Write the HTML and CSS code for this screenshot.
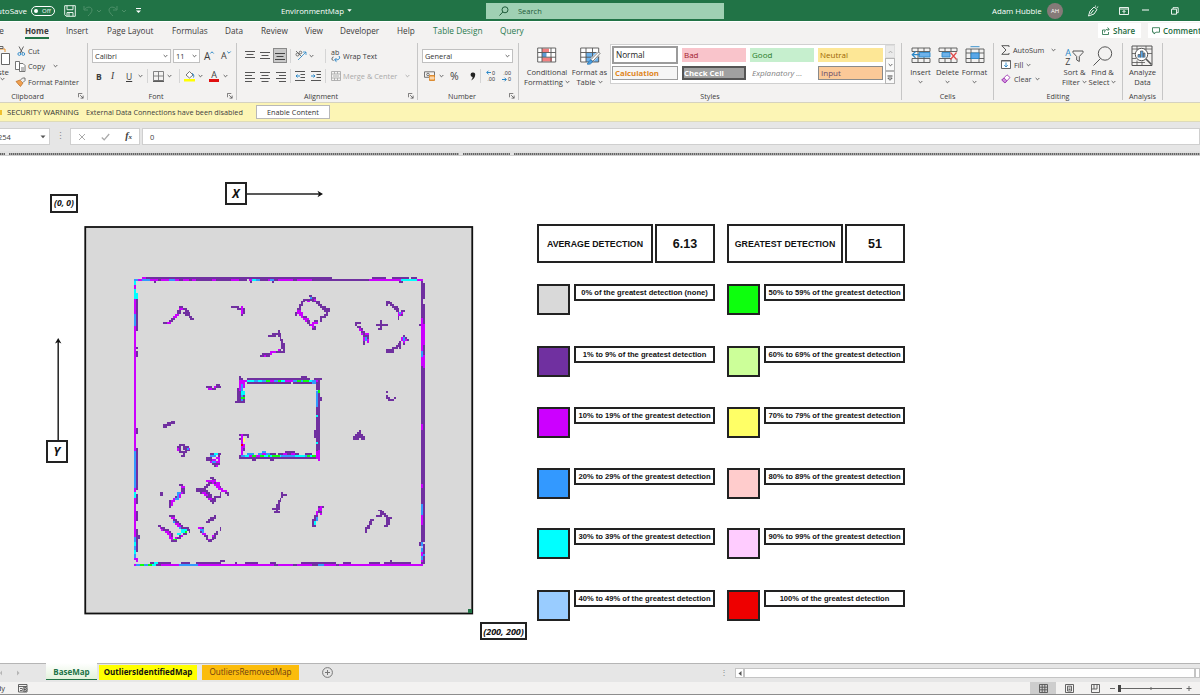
FILE: index.html
```html
<!DOCTYPE html>
<html lang="en">
<head>
<meta charset="utf-8">
<title>EnvironmentMap</title>
<link rel="stylesheet" href="styles.css">
</head>
<body>
<svg class="defs" width="0" height="0">
  <symbol id="caret" viewBox="0 0 6 4"><path d="M.8.8 3 3 5.200.8" fill="none" stroke="currentColor" stroke-width="1.100"/></symbol>
  <symbol id="launch" viewBox="0 0 7 7"><path d="M.5 5V.5H5M2.500 2.500 6 6M6 3v3H3" fill="none" stroke="#555" stroke-width=".9"/></symbol>
</svg>
<div class="app">
  <header class="titlebar">
    <span class="autosave">AutoSave</span>
    <span class="toggle"><i></i>Off</span>
    <svg width="12" height="12" viewBox="0 0 12 12" fill="none" stroke="#e6f2ea"><path d="M.7.7h10.600v10.600H2.200L.7 9.800zM3 .7v4h6v-4M3 11V7.500h6V11M5 8v3"/></svg>
    <svg width="20" height="12" viewBox="0 0 20 12" fill="none" stroke="#4d9069"><path d="M1 1v4h4M1.300 4.500C4 1 9 1.500 9 5c0 2-2 4-4 6M14 5l2 2 2-2"/></svg>
    <svg width="20" height="12" viewBox="0 0 20 12" fill="none" stroke="#4d9069"><path d="M9 1v4H5M8.700 4.500C6 1 1 1.500 1 5c0 2 2 4 4 6M14 5l2 2 2-2"/></svg>
    <svg width="9" height="8" viewBox="0 0 9 8"><path d="M2 1.500h5" stroke="#fff"/><path d="M2 3.500h5L4.500 6z" fill="#fff"/></svg>
    <span class="doc">EnvironmentMap<svg width="5" height="3" viewBox="0 0 5 3"><path d="M.3.3h4.400L2.500 2.700z" fill="#fff"/></svg></span>
    <span class="search"><svg width="10" height="10" viewBox="0 0 10 10" fill="none" stroke="#1f5c3a"><circle cx="6" cy="3.800" r="3"/><path d="M3.800 6 .5 9.500"/></svg>Search</span>
    <span class="user">Adam Hubble</span>
    <span class="avatar">AH</span>
    <svg class="c" width="12" height="12" viewBox="0 0 12 12" fill="none" stroke="#fff" stroke-width=".9"><path d="M1.500 11 3 6l4-4 3 2.500-3 4.500zM3.500 9l3-4M8 1.500l1-.8M9.800 2.600l1.400-.8"/></svg>
    <svg class="c" width="10" height="8" viewBox="0 0 10 8" fill="none" stroke="#fff" stroke-width=".9"><path d="M.5.5h9v7h-9zM.5 2h9M5 6.500V3.500M3.500 5 5 3.500 6.500 5"/></svg>
    <svg class="min" width="7" height="3" viewBox="0 0 7 3"><path d="M0 1h7" stroke="#fff"/></svg>
    <svg class="rest" width="8" height="8" viewBox="0 0 8 8" fill="none" stroke="#fff" stroke-width=".9"><path d="M.5 2.200h5v5h-5zM2 2V.7h5.200v5H6"/></svg>
  </header>

  <nav class="tabs">
    <span class="file">File</span><span class="active">Home</span><span>Insert</span><span>Page Layout</span><span>Formulas</span><span>Data</span><span>Review</span><span>View</span><span>Developer</span><span>Help</span><span class="ctx">Table Design</span><span class="ctx">Query</span>
    <span class="btn share"><svg width="8" height="8" viewBox="0 0 8 8" fill="none" stroke="#1d6b40" stroke-width=".8"><path d="M3 3H.5v4.500h6V5M2.500 5.500C2.500 3 4 2.200 7 2.200M5.500.5 7.300 2.200 5.500 4"/></svg>Share</span>
    <span class="btn comments"><svg width="8" height="8" viewBox="0 0 8 8" fill="none" stroke="#1d6b40" stroke-width=".8"><path d="M.5.7h7v4.500H4L2 7V5.200H.5z"/></svg>Comments</span>
  </nav>

  <section class="ribbon">
    <div class="group g-clip">
      <div class="body">
        <div class="paste">
          <svg width="11" height="21" viewBox="0 0 11 21" fill="none" stroke="#666"><path d="M0 4h5v3" stroke="#e8912d"/><path d="M0 1.500h3v2H0"/><path d="M1.500 8.500h8v11h-8z" fill="#fff"/></svg>
          <span class="crop">Paste</span><svg class="caret"><use href="#caret"/></svg>
        </div>
        <div class="rows3">
          <span class="cmd"><svg width="9" height="10" viewBox="0 0 9 10" fill="none" stroke="#555" stroke-width=".9"><path d="m2 .5 3.500 6.500M6.500.5 3.200 7"/><circle cx="2.300" cy="8" r="1.400" stroke="#2b88c8"/><circle cx="6.300" cy="8" r="1.400" stroke="#2b88c8"/></svg><em>Cut</em></span>
          <span class="cmd"><svg width="11" height="11" viewBox="0 0 11 11" fill="#fff" stroke="#666" stroke-width=".9"><path d="M.5.5h4v8h-4zM4.500 2.500h3.500l2 2v6H4.500zM6 7h3M6 9h3"/></svg><em>Copy</em><svg class="caret c2"><use href="#caret"/></svg></span>
          <span class="cmd"><svg width="11" height="10" viewBox="0 0 11 10"><path d="M1 4.500 5 3l3 3-2.500 3.500L4 8z" fill="#f0a050" stroke="#b86a20" stroke-width=".7"/><path d="m5.500 3 2-2h2.500v2.500L8 5.500" fill="#eee" stroke="#555" stroke-width=".8"/></svg><em>Format Painter</em></span>
        </div>
      </div>
      <div class="label lc">Clipboard<svg class="launch"><use href="#launch"/></svg></div>
    </div>

    <div class="group g-font">
      <div class="row r1"><span class="box f1">Calibri<svg class="caret"><use href="#caret"/></svg></span><span class="box f2">11<svg class="caret"><use href="#caret"/></svg></span><span class="big">A<svg width="4" height="3" viewBox="0 0 4 3"><path d="M.3 2.500 2 .8l1.700 1.700" fill="none" stroke="#2b88c8"/></svg></span><span class="big sm">A<svg width="4" height="3" viewBox="0 0 4 3"><path d="M.3.5 2 2.200 3.700.5" fill="none" stroke="#2b88c8"/></svg></span></div>
      <div class="row r2">
        <b>B</b><i class="it">I</i><u>U</u><svg class="caret"><use href="#caret"/></svg><hr>
        <svg width="11" height="11" viewBox="0 0 11 11" fill="none" stroke="#777" stroke-width=".9"><path d="M.5.5h10v9H.5zM5.500.5v9M.5 5h10"/><path d="M0 10.300h11" stroke="#222"/></svg><svg class="caret"><use href="#caret"/></svg><hr>
        <svg width="11" height="12" viewBox="0 0 11 12"><path d="m2 5 3.500-3.500L9 5 5.500 8z" fill="#fff" stroke="#555" stroke-width=".8"/><path d="M8 3.500c2 .5 2 2.500 1.500 4" fill="none" stroke="#2b88c8"/><path d="M0 9h11v2.500H0z" fill="#ffff00"/></svg><svg class="caret"><use href="#caret"/></svg>
        <span class="fcolor">A</span><svg class="caret"><use href="#caret"/></svg>
      </div>
      <div class="label lf">Font<svg class="launch"><use href="#launch"/></svg></div>
    </div>

    <div class="group g-align">
      <div class="row a1">
        <svg width="10" height="11" viewBox="0 0 10 11" stroke="#555"><path d="M0 1.500h10M1.500 4.500h7M0 7.500h10"/></svg>
        <svg width="10" height="11" viewBox="0 0 10 11" stroke="#555"><path d="M0 2.500h10M1.500 5.500h7M0 8.500h10"/></svg>
        <span class="on"><svg width="10" height="11" viewBox="0 0 10 11" stroke="#444"><path d="M0 3.500h10M1.500 6.500h7M0 9.500h10"/></svg></span><hr>
        <svg width="12" height="11" viewBox="0 0 12 11" fill="none" stroke="#555" stroke-width=".8"><circle cx="2.500" cy="4.500" r="1.500"/><path d="m1 1 6 6"/><circle cx="5.500" cy="2.500" r="1.300"/><path d="m3 10 8-8M8 2h3v3" stroke="#2b88c8"/></svg><svg class="caret"><use href="#caret"/></svg><hr>
        <span class="wrapi"><small>ab</small><svg width="10" height="6" viewBox="0 0 10 6" fill="none" stroke="#2b88c8"><path d="M8 0c2 3-1 4-4 4M5.500 2 3.500 4l2 1.700"/><path d="M2.500 1c-2 0-2 3.500 0 3.500" stroke="#555"/></svg></span><em>Wrap Text</em>
      </div>
      <div class="row a2">
        <svg width="10" height="11" viewBox="0 0 10 11" stroke="#555"><path d="M0 1.500h10M0 4.500h7M0 7.500h10M0 10.500h7"/></svg>
        <svg width="10" height="11" viewBox="0 0 10 11" stroke="#555"><path d="M0 1.500h10M1.500 4.500h7M0 7.500h10M1.500 10.500h7"/></svg>
        <svg width="10" height="11" viewBox="0 0 10 11" stroke="#555"><path d="M0 1.500h10M3 4.500h7M0 7.500h10M3 10.500h7"/></svg><hr>
        <svg width="10" height="10" viewBox="0 0 10 10" fill="none" stroke="#555"><path d="M0 .5h10M5.500 3.500H10M5.500 6.500H10M0 9.500h10"/><path d="M5 5H1M2.500 3.500 1 5l1.500 1.500" stroke="#2b88c8"/></svg>
        <svg width="10" height="10" viewBox="0 0 10 10" fill="none" stroke="#555"><path d="M0 .5h10M5.500 3.500H10M5.500 6.500H10M0 9.500h10"/><path d="M0 5h4M2.500 3.500 4 5 2.500 6.500" stroke="#2b88c8"/></svg><hr>
        <svg width="10" height="10" viewBox="0 0 10 10" fill="none" stroke="#aaa" stroke-width=".9"><path d="M.5.5h9v9h-9zM.5 3h9M.5 7h9M3.500.5V3M6.500.5V3M3.500 7v2.500M6.500 7v2.500M2 5h6"/></svg><em class="dim">Merge &amp; Center</em><svg class="caret dim"><use href="#caret"/></svg>
      </div>
      <div class="label la">Alignment<svg class="launch"><use href="#launch"/></svg></div>
    </div>

    <div class="group g-num">
      <div class="row n1"><span class="box">General<svg class="caret"><use href="#caret"/></svg></span></div>
      <div class="row n2">
        <svg width="11" height="10" viewBox="0 0 11 10" fill="none" stroke="#666" stroke-width=".9"><path d="M.5.8h10v5.500H.5z"/><circle cx="4" cy="3.500" r="1.300"/><path d="M5.500 4.500h5v5h-5z" fill="#f4b46a" stroke="#d98324"/><path d="M5.500 7h5" stroke="#fff"/></svg><svg class="caret"><use href="#caret"/></svg>
        <span class="pct">%</span><span class="comma"><svg width="6" height="9" viewBox="0 0 6 9"><path d="M3 .5a2.200 2.200 0 0 1 2.200 2.500C5 5.500 3.500 7.500 1 8.500 2.300 7 2.600 6 2.600 5A2.200 2.200 0 0 1 3 .5z" fill="#222"/></svg></span><hr>
        <span class="dec"><span><svg width="5" height="5" viewBox="0 0 5 5"><path d="M5 2.500H.8M2.500.7.7 2.500l1.800 1.800" fill="none" stroke="#2b88c8"/></svg>0</span><span>.00</span></span><span class="dec"><span>.00</span><span><svg width="5" height="5" viewBox="0 0 5 5"><path d="M0 2.500h4.200M2.500.7l1.800 1.800-1.800 1.800" fill="none" stroke="#2b88c8"/></svg>0</span></span>
      </div>
      <div class="label ln">Number<svg class="launch"><use href="#launch"/></svg></div>
    </div>

    <div class="group g-styles">
      <div class="body">
        <div class="tall t1"><svg width="20" height="20" viewBox="0 0 20 20"><path d="M.7 1.500h18v14H.7z" fill="#fff"/><path d="M5 2h7v4H5zM5 11h10v4H5z" fill="#f28080"/><path d="M5 6h4.500v4.500H5z" fill="#5b9bd5"/><path d="M.7 1.500h18v14H.7zM.7 6h18M.7 10.700h18M5 1.500v14M14 1.500v14" fill="none" stroke="#555" stroke-width=".9"/></svg><span>Conditional</span><span>Formatting<svg class="caret"><use href="#caret"/></svg></span></div>
        <div class="tall t2"><svg width="20" height="20" viewBox="0 0 20 20"><path d="M.7 1.500h18v14H.7z" fill="#fff"/><path d="M6 6h13v9.500H6z" fill="#6fb2ea"/><path d="M.7 1.500h18v14H.7zM.7 6h18M.7 10.700h18M6 1.500v14M12.500 1.500v14" fill="none" stroke="#555" stroke-width=".9"/><path d="M19 6.500 12 13.500" stroke="#fff" stroke-width="4"/><path d="M18.500 5.500 11 13l1.800 1.800L20 7z" fill="#fff" stroke="#555" stroke-width=".8"/><path d="M11 13.500c-2 0-2 3-4 4 2.500 1 5-.5 5.300-2.500z" fill="#4a9ee0" stroke="#2b78b8" stroke-width=".8"/></svg><span>Format as</span><span>Table<svg class="caret"><use href="#caret"/></svg></span></div>
        <div class="gallery">
          <div class="cells"><span class="normal">Normal</span><span class="bad">Bad</span><span class="good">Good</span><span class="neutral">Neutral</span><span class="calc">Calculation</span><span class="check">Check Cell</span><span class="expl">Explanatory ...</span><span class="input">Input</span></div>
          <div class="scroll"><span><svg class="caret up dim"><use href="#caret"/></svg></span><span><svg class="caret"><use href="#caret"/></svg></span><span class="more"><svg width="6" height="6" viewBox="0 0 6 6"><path d="M.5 1h5" stroke="#444"/><path d="M.8 3h4.400L3 5.300z" fill="none" stroke="#444" stroke-width=".8"/></svg></span></div>
        </div>
      </div>
      <div class="label">Styles</div>
    </div>

    <div class="group g-cells">
      <div class="body">
        <div class="tall"><svg width="20" height="20" viewBox="0 0 20 20" fill="none" stroke="#555" stroke-width=".9"><path d="M1 5V1.500h18V5M7 1.500V16M13 1.500V16M1 12v4h18v-4M1 5h18M1 12h18"/><path d="M8 6h11v4.500H8z" fill="#6fb2ea" stroke="#2b88c8"/><path d="M9 8.200H1.500M4.500 5 1.300 8.200l3.200 3.200" stroke="#2b88c8" stroke-width="1.300"/></svg><span>Insert</span><svg class="caret"><use href="#caret"/></svg></div>
        <div class="tall"><svg width="20" height="20" viewBox="0 0 20 20" fill="none" stroke="#555" stroke-width=".9"><path d="M1 5V1.500h18V5M7 1.500V5M13 1.500V5M7 12v4M13 12v4M1 12v4h18v-4M1 5h18M1 12h12"/><path d="M4 6h8v4.500H4z" fill="#6fb2ea" stroke="#2b88c8"/><path d="m12.500 6 6 7M18.500 6l-6 7" stroke="#e04848" stroke-width="1.200"/></svg><span>Delete</span><svg class="caret"><use href="#caret"/></svg></div>
        <div class="tall"><svg width="20" height="20" viewBox="0 0 20 20" fill="none" stroke="#555" stroke-width=".9"><path d="M1 2.500h18V16H1zM6 2.500V16M14 2.500V16M1 6.500h18M1 12h18"/><path d="M6 6.500h8V12H6z" fill="#5aa7e8" stroke="#2b88c8"/><path d="M5.500.2h9" stroke="#2b88c8"/></svg><span>Format</span><svg class="caret"><use href="#caret"/></svg></div>
      </div>
      <div class="label">Cells</div>
    </div>

    <div class="group g-edit">
      <div class="body">
        <div class="rows3">
          <span class="cmd"><svg width="9" height="10" viewBox="0 0 9 10" fill="none" stroke="#555"><path d="M8 2V.7H.8L5 5 .8 9.300H8V8"/></svg><em>AutoSum</em><svg class="caret c3"><use href="#caret"/></svg></span>
          <span class="cmd"><svg width="10" height="9" viewBox="0 0 10 9" fill="#fff" stroke="#555" stroke-width=".9"><path d="M.5.5h9v8h-9z"/><path d="M.5 1h9"/><path d="M5 2.500v4.500M3.200 5.200 5 7l1.800-1.800" stroke="#2b88c8" fill="none"/></svg><em>Fill</em><svg class="caret"><use href="#caret"/></svg></span>
          <span class="cmd"><svg width="10" height="10" viewBox="0 0 10 10" fill="#fff" stroke="#a33fb5" stroke-width=".9"><path d="M.8 6 6 .8 9 3.500 4 9z"/><path d="M.8 6 3 4l3 2.800L4 9z" fill="#cf8fdc"/></svg><em>Clear</em><svg class="caret"><use href="#caret"/></svg></span>
        </div>
        <div class="tall"><span class="az"><span><b>A</b><b>Z</b></span><svg width="12" height="13" viewBox="0 0 12 13" fill="none" stroke="#555"><path d="M1 1h10v1.500L7.300 6.500v5L4.700 10V6.500L1 2.500z"/></svg></span><span>Sort &amp;</span><span>Filter<svg class="caret"><use href="#caret"/></svg></span></div>
        <div class="tall"><svg width="20" height="20" viewBox="0 0 20 20" fill="none" stroke="#555"><circle cx="12" cy="7" r="6.700"/><path d="M7.500 12 .5 19"/></svg><span>Find &amp;</span><span>Select<svg class="caret"><use href="#caret"/></svg></span></div>
      </div>
      <div class="label">Editing</div>
    </div>

    <div class="group g-an">
      <div class="body"><div class="tall"><svg width="22" height="21" viewBox="0 0 22 21" fill="none" stroke="#555"><path d="M1 .5h20v19.500H1z"/><path d="M1 3.500h20M1 8h4M1 13h4M17 8h4M1 17h13M6 .5v4M15 .5v4M6 15v5M11 16v4" stroke-width=".8"/><circle cx="10.500" cy="9" r="6.200" fill="#fff"/><path d="m15 13.500 5.500 5.500" stroke-width="1.600"/><path d="M7 12V9h2v3M9.500 12V5.500H12V12M12.500 12V7.500h1.500V12" fill="#5aa7e8" stroke-width=".7"/></svg><span>Analyze</span><span>Data</span></div></div>
      <div class="label">Analysis</div>
    </div>
  </section>

  <div class="warning"><i class="shield"></i><strong>SECURITY WARNING</strong><span>External Data Connections have been disabled</span><button>Enable Content</button></div>

  <div class="formula">
    <div class="namebox"><span>254</span><svg width="6" height="4" viewBox="0 0 6 4"><path d="M.5.5h5L3 3.300z" fill="#555"/></svg></div>
    <div class="dots">⋮</div>
    <div class="fbtns"><svg width="8" height="8" viewBox="0 0 8 8" stroke="#aaa"><path d="m1 1 6 6M7 1 1 7"/></svg><svg width="9" height="8" viewBox="0 0 9 8" fill="none" stroke="#aaa" stroke-width="1.300"><path d="m.8 4.500 2.400 2.300L8.200 1"/></svg><i>f<small>x</small></i></div>
    <div class="fx">0</div>
  </div>
  <div class="colheads"><i></i><i></i><i></i><i></i></div>

  <main class="sheet">
    <span class="tag origin">(0, 0)</span>
    <span class="tag axis ax">X</span>
    <span class="tag axis ay">Y</span>
    <span class="tag extent">(200, 200)</span>
    <svg class="arrow arrx" width="77" height="8" viewBox="0 0 77 8"><path d="M0 4h74" stroke="#222" stroke-width="1.500"/><path d="m70.500.8 5.500 3.200-5.500 3.200 1.500-3.200z" fill="#111"/></svg>
    <svg class="arrow arry" width="8" height="103" viewBox="0 0 8 103"><path d="M4.200 3v100" stroke="#222" stroke-width="1.500"/><path d="M1 6.500 4.200 1l3.200 5.500L4.200 5z" fill="#111"/></svg>
    <svg class="map" id="map" width="389" height="389" viewBox="0 0 389 389"></svg>
    <div class="legend">
      <div class="side">
        <div class="stat"><span>AVERAGE DETECTION</span><b>6.13</b></div>
        <div class="item"><i class="c0"></i><span>0% of the greatest detection (none)</span></div>
        <div class="item"><i class="c1"></i><span>1% to 9% of the greatest detection</span></div>
        <div class="item"><i class="c10"></i><span>10% to 19% of the greatest detection</span></div>
        <div class="item"><i class="c20"></i><span>20% to 29% of the greatest detection</span></div>
        <div class="item"><i class="c30"></i><span>30% to 39% of the greatest detection</span></div>
        <div class="item"><i class="c40"></i><span>40% to 49% of the greatest detection</span></div>
      </div>
      <div class="side">
        <div class="stat"><span>GREATEST DETECTION</span><b>51</b></div>
        <div class="item"><i class="c50"></i><span>50% to 59% of the greatest detection</span></div>
        <div class="item"><i class="c60"></i><span>60% to 69% of the greatest detection</span></div>
        <div class="item"><i class="c70"></i><span>70% to 79% of the greatest detection</span></div>
        <div class="item"><i class="c80"></i><span>80% to 89% of the greatest detection</span></div>
        <div class="item"><i class="c90"></i><span>90% to 99% of the greatest detection</span></div>
        <div class="item"><i class="c100"></i><span>100% of the greatest detection</span></div>
      </div>
    </div>
  </main>

  <div class="sheets">
    <div class="navs"><svg width="22" height="6" viewBox="0 0 22 6" fill="#b5b5b5"><path d="M2 .5v5L0 3zM17 .5v5L19.500 3z"/></svg></div>
    <span class="st base">BaseMap</span><span class="st ident">OutliersIdentifiedMap</span><span class="st removed">OutliersRemovedMap</span>
    <svg class="plus" width="11" height="11" viewBox="0 0 11 11" fill="none" stroke="#777"><circle cx="5.500" cy="5.500" r="4.900"/><path d="M5.500 3v5M3 5.500h5"/></svg>
    <span class="grip">⋮</span>
    <div class="hbar"><span class="left"><svg width="4" height="5" viewBox="0 0 4 5"><path d="M3.500 0v5L.5 2.500z" fill="#555"/></svg></span><span class="track"></span><span class="right"></span></div>
  </div>
  <footer class="status">
    <span class="ready">Ready</span>
    <svg width="10" height="9" viewBox="0 0 10 9" fill="none" stroke="#555" stroke-width=".9"><path d="M.5.5h8.500v7.500H.5zM.5 2.500H9M2 4.500h2M2 6.500h2"/><circle cx="6.800" cy="5.500" r="2.200" fill="#ddd"/><circle cx="6.800" cy="5.500" r=".8" fill="#444"/></svg>
    <span class="view on"><svg width="9" height="9" viewBox="0 0 9 9" fill="none" stroke="#555" stroke-width=".9"><path d="M.5.5h8v8h-8zM3.200.5v8M5.800.5v8M.5 3.200h8M.5 5.800h8"/></svg></span>
    <span class="view"><svg width="9" height="9" viewBox="0 0 9 9" fill="none" stroke="#555" stroke-width=".9"><path d="M.5.5h8v8h-8zM2.500 2.200h4v4.800h-4zM3.500 4h2M3.500 5.500h2"/></svg></span>
    <span class="view"><svg width="9" height="9" viewBox="0 0 9 9" fill="none" stroke="#555" stroke-width=".9"><path d="M.5.5h8v8h-8zM3 .5v4.500M6 .5v4.500M.5 5H6"/></svg></span>
    <svg class="zoom" width="82" height="9" viewBox="0 0 82 9" stroke="#666"><path d="M0 4.500h5M76.500 4.500h5M79 2v5M8 4.500h64" /><path d="M41 3v3"/><path d="M8 1h3v7H8z" fill="#444" stroke="none"/></svg>
  </footer>
</div>
<script src="map.js"></script>
</body>
</html>
```
FILE: styles.css
```css
*{box-sizing:border-box}
body{margin:0;font-family:"Open Sans","Noto Sans",sans-serif;font-size:7.500px;color:#3c3c3c;background:#fff}
svg{flex:none;display:block;overflow:visible}
em,i{font-style:normal}
em,span,strong,b{white-space:nowrap}
hr{border:0;margin:0;width:1px;height:14px;background:#d5d5d5}
.defs{position:absolute}
.app{width:1200px;height:695px;display:flex;flex-direction:column;overflow:hidden}
.caret{width:5px;height:4px;color:#555}
.dim{color:#aaa!important}
.up{transform:rotate(180deg)}

.titlebar{height:21px;flex:none;background:#217346;color:#fff;display:grid;grid-template-columns:31px 33px 19px 25px 25px 148px 205px 506px 55px 32px 28px 33px 28px 32px;align-items:center;font-size:7.800px}
.autosave{justify-self:end;margin-right:4px;font-size:8px}
.toggle{width:24px;height:10px;border:1px solid #fff;border-radius:5px;font-size:6px;line-height:8px;display:flex;align-items:center;gap:4px;padding-left:2px}
.toggle i{width:4px;height:4px;border-radius:50%;background:#fff}
.titlebar>svg:nth-of-type(4){margin-left:1px}
.doc{display:flex;align-items:center;gap:3px}
.search{width:238px;height:16px;background:#9fd0b3;color:#1f5c3a;display:flex;align-items:center;padding-left:13px;gap:9px;font-size:7.500px}
.avatar{width:16px;height:16px;border-radius:50%;background:#857a78;font-size:6px;display:grid;place-items:center}
.user{font-size:7.800px}
.c{justify-self:center}.min{justify-self:start;margin-left:2px}.rest{margin-left:3px}

.tabs{height:22px;flex:none;background:#f3f2f1;border-top:1px solid #fff;display:grid;grid-template-columns:25px 41px 41px 65px 53px 36px 44px 35px 57px 36px 67px 598px 50px 52px;font-size:8.200px;line-height:18px}
.tabs>span{justify-self:start}
.file{margin-left:-9px}
.active{font-weight:700;height:17px;border-bottom:2px solid #217346;font-size:8px}
.tabs .ctx{color:#2b7a50;font-size:8.300px}
.btn{background:#fff;height:15px;margin-top:1px;display:flex;align-items:center;gap:3px;color:#1d6b40;font-weight:600;padding-left:4px;font-size:8px;line-height:14px}
.share{width:43px}.comments{width:60px}

.ribbon{height:60px;flex:none;background:#f3f2f1;display:grid;grid-template-columns:88px 149px 181px 101px 383px 92px 129px 40px 37px;border-bottom:1px solid #d5d2c0}
.group{height:57px;border-right:1px solid #c6c6c6;display:flex;flex-direction:column;position:relative;min-width:0}
.body{height:47px;display:flex}
.label{margin-top:auto;height:8px;line-height:8px;text-align:center;font-size:7.200px;display:flex;justify-content:center}
.launch{width:6px;height:6px;margin-top:1px;position:absolute;right:3px}
.lc{padding-right:32px}
.lf{padding-right:12px}.la{padding-right:12px}.ln{padding-right:12px}
.paste{width:14px;overflow:hidden;padding-top:2px}
.crop{display:block;margin:1px 0 0 -11px;line-height:10px;font-size:7.800px}
.rows3{display:grid;grid-auto-rows:15.500px}
.cmd{display:flex;align-items:center;gap:2px;font-size:7.600px}
.g-clip .cmd{font-size:7.300px}
.g-clip .rows3{padding-left:1px}
.g-clip .cmd:nth-child(1){padding-left:2px}
.c2{margin-left:6px}
.row{display:grid;align-items:center}
.r1,.a1,.n1{margin-top:5px;height:15px}
.r2,.a2,.n2{height:26px}
.box{background:#fff;border:1px solid #c0c0c0;height:14px;display:flex;align-items:center;justify-content:space-between;padding:0 2px;font-size:7.400px;color:#333}
.r1{grid-template-columns:79px 27px 15px 17px;column-gap:2px;padding-left:4px}
.big{font-size:10px;padding-left:2px;line-height:12px;display:flex}
.big svg{margin-top:1px}
.big.sm{font-size:9px}
.r2{grid-template-columns:15px 15px 12px 9px 6px 14px 12px 5px 14px 11px 14px 9px;padding-left:8px;font-size:8.500px}
.it{font-style:italic;font-family:"Liberation Serif",serif;font-size:9.500px}
.fcolor{border-bottom:3px solid #e01010;line-height:9px;height:12px;width:10px;text-align:center;font-size:9px}
.a1{grid-template-columns:15px 13px 17px 5px 14px 16px 6px 12px 40px;padding-left:8px}
.a2{grid-template-columns:15px 16px 14px 5px 16px 14px 6px 12px 62px 9px;padding-left:8px}
.a1 em{font-size:7.200px}.a2 em{font-size:7.400px}
.on{background:#c9c9c9;border:1px solid #8a8a8a;width:14px;height:15px;display:grid;place-items:center}
.wrapi small{display:block;font-size:7px;line-height:6px}
.n1{padding:0 4px}
.n1 .box{width:91px}
.n2{grid-template-columns:15px 11px 20px 10px 5px 16px 12px;padding-left:6px}
.pct{font-size:10.500px}
.dec{font:5.500px/6.500px "Liberation Sans",sans-serif;display:grid;width:10px}
.dec span{display:flex;justify-content:flex-end;align-items:center;gap:1px}

.g-styles .body{padding-left:5px}
.tall{display:flex;flex-direction:column;align-items:center;font-size:7.600px;line-height:10px;padding-top:3px}
.tall>svg:first-child{height:21px}
.tall>span{display:flex;align-items:center;gap:2px}
.tall>.caret{margin-top:3px}
.t1{width:46px}.t2{width:39px}
.gallery{margin:1px 0 0 1px;width:285px;height:40px;background:#fff;border:1px solid #d0d0d0;display:flex;justify-content:space-between}
.cells{display:grid;grid-template-columns:66px 64px 64px 65px;column-gap:4px;grid-template-rows:18px 15px;row-gap:1px;padding:1px;align-items:center;font-size:8px;line-height:13px}
.cells span{height:14px;padding-left:2px}
.cells .normal{height:18px;border:2px solid #9b9b9b;line-height:14px;color:#222;font-size:8.200px}
.bad{background:#f9c4cb;color:#a02030}.good{background:#c6efce;color:#2a7a2a}.neutral{background:#fde796;color:#9c6500}
.cells .calc{color:#e0861e;font-weight:700;border:1px solid #9b9b9b;background:#f5f5f5;line-height:12px;font-size:7.800px}
.cells .check{background:#a0a0a0;color:#fff;font-weight:700;border:2px solid #555;padding-left:0;line-height:10px;font-size:7.800px}
.cells .expl{font-style:italic;color:#7f7f7f}
.cells .input{background:#fbc998;border:1px solid #8a8a8a;color:#6a4a6a;line-height:12px}
.scroll{width:10px;display:grid;grid-template-rows:13px 13px 13px;margin-right:-1px}
.scroll span{border:1px solid #b5b5b5;display:grid;place-items:center;background:#fafafa}
.scroll span:first-child{background:#eaeaea;border-color:#ddd}

.g-cells .body{padding-left:5px}
.g-cells .tall{width:27px}
.g-edit .rows3{grid-auto-rows:14.500px;width:67px;padding-left:7px}
.g-edit .cmd{gap:3px}
.g-edit .cmd em{font-size:7.300px}
.c3{margin-left:4px}
.g-edit .tall:nth-child(2){width:27px}.g-edit .tall:nth-child(3){width:29px}
.tall>.az{height:21px;gap:1px}
.az>span{display:grid;line-height:9px;font-size:9px}
.az b{font-weight:400}.az b:first-child{color:#2b88c8}
.g-an .body{justify-content:center}
.g-an .tall{padding-top:2px}.g-an .tall svg{height:22px}

.warning{height:19px;flex:none;background:#fcf5b5;border-bottom:1px solid #dedbb8;display:grid;grid-template-columns:7px 79px 170px 74px;align-items:center;font-size:7.260px}
.warning strong{font-weight:400;font-size:7.650px;color:#333}
.shield{width:2px;height:5px;background:#f0c030}
.warning button{font:inherit;color:#333;background:#fff;border:1px solid #b8b8b8;height:14px;padding:0;line-height:10px;margin-top:-1px}

.formula{height:29px;flex:none;background:#e6e6e6;display:grid;grid-template-columns:50px 20px 70px 2px 1fr;padding-top:6px}
.formula>div{height:17px}
.namebox,.fbtns,.fx{background:#fff;border:1px solid #cfcfcf;display:flex;align-items:center}
.namebox{border-left:0;justify-content:space-between;padding-right:3px}
.namebox span{margin-left:-2px}
.dots{text-align:center;color:#888;line-height:15px;font-size:9px}
.fbtns{justify-content:space-between;padding:0 7px}
.fbtns i{font-family:"Liberation Serif",serif;font-style:italic;font-weight:700;font-size:10px;line-height:12px}
.fbtns small{font-size:7px}
.fx{grid-column:5;padding-left:7px}
.colheads{height:5px;flex:none;background:#e2e2e2;display:grid;grid-template-columns:5px 450px 47px 1fr;column-gap:4px;padding-top:1px;border-bottom:1px solid #d0d0d0}
.colheads i{height:2px;margin-top:1px;background:repeating-linear-gradient(90deg,#666 0 1px,#aaa 1px 2px)}

/* drawing surface: shapes float over the grid at free positions */
.sheet{height:507px;flex:none;position:relative;background:#fff}
.tag{position:absolute;border:2px solid #222;background:#fff;color:#111;font-weight:700;font-style:italic;display:grid;place-items:center;line-height:1}
.origin{left:50px;top:38px;width:28px;height:19px;font-size:8.500px}
.axis{width:22px;height:23px;font-size:12px}
.ax{left:225px;top:26px}.ay{left:46px;top:284px}
.extent{left:480px;top:466px;width:47px;height:18px;font-size:9px}
.arrow{position:absolute}
.arrx{left:247px;top:34px}.arry{left:54px;top:181px}
.map{position:absolute;left:84px;top:70px}
.legend{position:absolute;left:537px;top:68px;display:grid;grid-template-columns:178px 178px;column-gap:12px;font-family:"Liberation Sans",Arial,sans-serif;font-weight:700;color:#111}
.side{display:grid;grid-template-rows:60px 62px 61px 61px 60px 62px 31px}
.stat{display:grid;grid-template-columns:116px 60px;column-gap:2px;height:39px}
.stat>*{border:2px solid #222;display:grid;place-items:center}
.stat span{font-size:8.800px}.stat b{font-size:12.500px}
.item{display:grid;grid-template-columns:33px 141px;column-gap:4px;height:31px}
.item i{border:2px solid #222}
.item span{border:2px solid #222;height:17px;display:grid;place-items:center;font-size:7.600px;line-height:1}
.c0{background:#d9d9d9}.c1{background:#7030a0}.c10{background:#cc00ff}.c20{background:#3399ff}.c30{background:#00ffff}.c40{background:#99ccff}
.c50{background:#0dff0d}.c60{background:#ccff99}.c70{background:#ffff66}.c80{background:#ffcccc}.c90{background:#ffccff}.c100{background:#ee0000}

.sheets{height:19px;flex:none;background:#e6e6e6;border-top:1px solid #b5b5b5;display:grid;grid-template-columns:46px 51px 104px 119px 400px 15px 465px;align-items:start}
.navs{padding:6px 0 0 0}
.st{text-align:center;height:15px;line-height:14px;font-size:8px}
.base{background:linear-gradient(#fff,#e3f2dc);margin-top:-1px;height:17px;line-height:17px;color:#217346;font-weight:700;border-bottom:1px solid #217346}
.ident{background:#ffff00;color:#111;font-weight:700;margin:1px 4px 0 2px}
.removed{background:#fbbc0c;color:#6b3b10;margin:1px 22px 0 1px;width:97px;font-size:8.100px}
.plus{margin:3px 0 0 2px}
.grip{text-align:center;color:#888;line-height:16px}
.sheets .grip{margin-left:-7px}
.hbar{display:grid;grid-template-columns:9px 451px 5px;margin-top:4px;height:10px}
.hbar span{border:1px solid #c4c4c4;background:#fff;display:grid;place-items:center}

.status{height:13px;flex:none;background:#f3f2f1;border-bottom:1px solid #8d8d8d;display:grid;grid-template-columns:18px 1012px 26px 26px 26px 92px;align-items:center}
.ready{justify-self:end;margin-right:13px;font-size:7.500px}
.view{height:12px;display:grid;place-items:center}
.view.on{background:#cdcdcd;border:0;width:auto}
.zoom{margin-left:2px}
```
FILE: map.js
```js
// Environment grid: 200 x 200 cells, filled by tracing detected surfaces.
const COLORS = {p:'#7030a0', m:'#cc00ff', b:'#3399ff', c:'#00ffff', g:'#0dff0d', y:'#ffff66', r:'#ee0000', l:'#99ccff', w:'#d9d9d9'};
const CELL = 1.935;
const LEFT = 2, TOP = 1;
const cells = new Map();

// Each quadrant lists traces as "palette x,y x,y ..." at a third of a pixel.
const quadrants = [
  {x: 36, y: 39, traces: `
    p 68,40 480,40|bbbmb 48,46 105,46|mmmp 105,46 145,46|b 148,46 168,46|mmmp 168,46 210,46|pppm 210,46 375,46|mpbc 390,46 480,46|p 395,50 395,50|p 102,50 102,50|p 456,50 456,50|m 68,40 74,40
    cccm 45,50 45,105|c 51,85 51,103|m 45,105 45,480|p 50,105 50,195|b 45,148 45,180|p 50,247 50,247|p 50,258 50,272
    pm 135,174 146,172 160,158 172,146 182,138|p 182,126 186,126|p 174,136 180,130 192,130|p 190,134 200,146 208,158 218,160|p 190,142 202,152|m 182,134 188,134
    p 338,127 350,127 358,132 364,138 368,144|m 364,126 364,146|p 370,132 370,146|p 364,150 364,150
    p 448,213 458,213 462,208 470,208|p 478,195 478,215
    pm 426,270 438,270 446,264 460,262 466,258 480,256|p 428,264 446,264
    p 262,364 274,364|mp 268,370 276,370 284,364 300,364|p 288,358 294,358
    p 134,480 148,474 160,470
    p 357,342 368,342|p 361,336 361,342|p 385,342 480,342|mbbcmgc 372,348 480,348|p 385,353 478,353|m 361,350 361,375|p 356,372 356,410|p 361,380 361,410|mbcbc 367,350 367,410|m 373,352 373,365|cbg 373,380 373,405|p 374,394 374,414|g 367,402 371,402|p 350,410 365,410`},
  {x: 186, y: 39, traces: `
    p 0,40 183,40|mmmp 0,46 130,46|p 130,46 450,46|mmp 300,46 345,46|b 2,46 8,46|p 312,40 345,40|p 370,40 390,40|p 398,40 415,40|p 424,40 440,40|m 350,46 396,46|cbc 398,46 440,46|m 443,46 455,46|p 393,50 398,50
    p 453,50 453,480|p 459,56 459,98|p 459,122 459,165|m 453,160 453,300|p 459,175 459,480|m 459,180 459,240|m 459,270 459,306|b 453,258 453,270|p 447,178 447,178
    p 0,212 8,212|p 8,208 18,208|p 28,196 28,214|p 34,208 34,226|p 38,228 38,250|p 42,240 42,260 20,258|m 0,262 14,262
    p 106,102 98,118 92,130 86,142|p 104,102 112,102|m 84,138 90,138|m 84,144 94,144|p 80,142 80,148|p 90,152 100,160 108,168|mp 92,150 104,164 114,176 124,182 132,188|mp 102,162 120,176|mp 124,178 134,170 140,174|p 134,184 134,190
    p 120,92 126,98 134,98|mp 114,110 120,102 130,104 140,112 146,120|p 126,106 138,108 150,120 160,128 166,136|p 148,124 160,134 170,140|p 162,132 174,132 174,138 168,148 160,156 154,166|b 122,98 126,98
    p 260,180 260,174 272,174|p 266,184 270,192 274,202 280,210|m 272,192 276,208|pm 276,204 290,214 290,230|pm 284,212 280,222 280,236|b 285,222 285,226
    p 348,120 348,108 358,114 368,120|p 364,122 376,126 384,132|p 376,130 388,140|mp 386,146 402,138|mp 388,150 398,150|b 392,144 392,146|p 388,156 388,160
    p 336,168 336,190|p 324,180 348,180|p 328,188 332,184
    p 348,254 370,254|p 350,260 366,260|p 368,248 384,242 384,236|p 392,234 392,246|mp 398,226 412,226|mp 400,218 408,222 404,238|b 402,222 404,224|p 404,212 404,216
    p 348,382 348,382|p 348,393 348,400 354,404 366,404|p 372,400 372,400
    p 0,342 120,342|p 134,342 152,342|p 97,337 107,337|mcbbcmgc 0,348 95,348|g 103,348 118,348|cb 120,348 142,348|p 0,353 20,353|p 30,353 60,353|p 70,356 76,356|p 82,353 132,353|b 132,353 144,356
    p 150,342 150,480|mbbcbcl 144,350 144,480|g 145,375 145,382|p 139,356 139,370|bcm 139,388 139,425|p 139,430 139,480|p 155,400 155,404`},
  {x: 36, y: 189, traces: `
    m 45,0 45,115|p 50,40 50,54|b 45,115 45,220|p 50,98 50,225|m 45,220 45,320|c 45,235 45,247|p 50,240 50,265|p 50,295 50,318|mbb 45,320 45,390|p 50,345 50,378|p 55,362 55,366|cb 45,385 45,430|p 50,380 50,408|mp 45,432 50,440
    m 45,448 480,448|bcggwc 50,448 110,448|p 95,442 150,442|p 110,448 122,448|b 178,448 235,448|mmb 240,448 285,448|p 185,442 210,442|p 230,442 300,442|p 304,437 312,437|p 345,442 346,442|p 378,442 410,442|c 105,442 107,442
    p 136,36 146,32 160,20|p 152,26 162,26
    mp 176,106 176,94 184,88 198,92 204,98 206,108|p 182,90 182,112 192,112 200,108|p 190,98 200,98|b 202,100 204,100|p 184,124 194,118
    p 262,132 276,126 274,138|p 260,136 270,136|p 270,118 290,118|b 272,124 284,124|c 284,120 290,120|p 294,118 304,118|p 298,122 298,146|mp 270,140 280,146 290,152|mp 278,138 292,146 298,138|b 276,140 282,142|m 290,130 296,134
    p 124,236 130,236|p 124,238 130,238
    p 178,210 188,214 188,222|mp 186,214 192,226 182,238|p 194,222 194,232|bp 182,234 166,250 150,266|mbp 178,246 162,258 150,272|p 150,262 150,274|b 170,252 176,246
    p 230,222 250,222|p 232,226 248,232|p 252,220 268,204|p 270,188 276,196 284,198|mp 262,198 280,204 292,216|mp 274,198 292,208 300,220 312,230 322,238|m 290,214 308,228|p 244,226 256,238 266,252 280,266|mp 248,234 262,248 276,260|p 256,230 268,242 280,258|m 268,250 272,254|p 280,258 286,248 296,246 302,236
    p 152,304 160,304|mb 156,308 162,320 172,330|p 162,314 176,326 186,338|mb 170,326 180,338 190,346|p 186,338 196,340 206,348|cg 184,350 196,350|c 186,346 196,346|p 190,358 196,356
    p 118,332 128,336|mp 124,338 140,352 150,364 162,378|p 130,336 146,350 158,362|m 140,352 158,372|p 154,380 166,380|mp 160,374 176,370 186,360|c 174,356 180,356|g 162,374 168,374|p 178,370 182,364
    p 260,320 272,314 282,304|p 264,314 280,308|p 304,338 304,344|mp 240,338 252,338|p 242,348 242,342|bm 244,346 252,356 256,364|p 254,362 262,376 268,382|mp 264,372 272,378 276,364|p 276,368 286,358 292,348
    p 480,250 476,268 468,280|p 460,280 470,280|p 466,290 474,290
    p 361,60 382,60|m 363,60 363,122|p 380,62 380,68|p 357,70 357,72|y 374,70 374,78|r 368,88 374,88|mp 374,90 374,106|p 357,126 364,128|bggcycm 368,122 480,122|b 385,118 400,118|bm 420,116 450,116|b 430,112 434,112|p 361,128 480,128|p 398,134 404,134|p 455,134 457,134`},
  {x: 186, y: 189, traces: `
    p 0,117 14,117|p 25,117 40,117|p 46,112 60,112|mp 42,117 85,117|p 105,117 126,117|cbcg 0,122 148,122|g 10,122 28,122|b 40,122 78,122|c 80,122 100,122|g 112,122 118,122|p 0,128 48,128|p 56,128 106,128|p 112,128 140,128|p 4,134 6,134|p 68,112 70,112
    p 150,0 150,134|m 150,105 150,134|cbcc 144,0 144,110|p 139,8 139,40|p 134,50 134,66|p 139,50 139,80|p 139,90 139,122|m 144,112 144,128
    p 271,48 271,48|p 262,54 268,54|p 256,60 272,60|p 254,66 280,66|p 254,70 264,70|p 278,70 280,70|p 274,60 276,60
    p 36,232 36,246|p 40,240 48,240|p 34,250 34,260|p 28,260 26,276|p 12,280 26,280|p 22,270 22,290|p 16,290 24,290
    p 150,272 158,272|mp 152,276 148,290 142,304|m 156,280 152,296|p 146,292 154,294|p 138,304 134,316|p 128,314 128,330|p 134,312 140,310|c 136,324 138,328|c 142,314 142,318|p 128,330 138,330|b 144,308 144,314
    p 304,314 300,330 292,340 284,348|p 308,316 300,336
    p 330,286 332,292 336,304|p 324,302 332,302|p 336,294 346,300|p 344,304 352,310 360,310|p 350,308 350,330|p 356,310 354,328|p 342,330 350,326
    p 453,0 453,445|p 459,0 459,380|m 453,30 453,45|m 453,212 453,218|b 453,270 453,302|m 457,302 457,325|bl 453,385 453,405|p 447,386 447,390|bm 453,405 453,435|p 459,390 459,442|b 459,418 459,422|m 440,448 455,448
    mmmp 0,448 240,448|m 240,448 440,448|b 148,448 158,448|p 0,442 14,442|p 97,442 195,442|p 225,442 240,442|p 300,442 328,442|p 345,442 420,442|p 365,436 365,440`}
];

function trace(palette, points) {
  let n = 0;
  for (let k = 0; k < Math.max(1, points.length - 1); k++) {
    let [x, y] = points[k];
    const [tx, ty] = points[Math.min(k + 1, points.length - 1)];
    const dx = Math.abs(tx - x), dy = -Math.abs(ty - y);
    const sx = x < tx ? 1 : -1, sy = y < ty ? 1 : -1;
    let err = dx + dy;
    for (;;) {
      const run = ((n >> 1) * 3 + (n >> 3)) % palette.length;
      cells.set(x + ',' + y, palette[run]);
      n++;
      if (x === tx && y === ty) break;
      const e2 = 2 * err;
      const stepX = e2 >= dy, stepY = e2 <= dx;
      if (stepX) { err += dy; x += sx; }
      if (stepX && stepY) cells.set(x + ',' + y, palette[run]);
      if (stepY) { err += dx; y += sy; }
    }
  }
}

for (const q of quadrants) {
  for (const line of q.traces.split(/[|\n]/)) {
    const [palette, ...pts] = line.trim().split(/\s+/);
    if (!palette) continue;
    trace(palette, pts.map(p => {
      const [x, y] = p.split(',').map(Number);
      return [Math.floor((q.x - LEFT + x / 3) / CELL), Math.floor((q.y - TOP + y / 3) / CELL)];
    }));
  }
}

const paths = {};
for (const [key, color] of cells) {
  const [i, j] = key.split(',').map(Number);
  const x0 = Math.round(LEFT + i * CELL), x1 = Math.round(LEFT + (i + 1) * CELL);
  const y0 = Math.round(TOP + j * CELL), y1 = Math.round(TOP + (j + 1) * CELL);
  paths[color] = (paths[color] || '') + `M${x0} ${y0}H${x1}V${y1}H${x0}z`;
}
document.getElementById('map').innerHTML =
  '<rect x="1.250" y="1" width="387" height="386.500" fill="#d9d9d9" stroke="#111" stroke-width="1.800"/>' +
  '<g shape-rendering="crispEdges">' +
  Object.entries(paths).map(([c, d]) => `<path fill="${COLORS[c]}" d="${d}"/>`).join('') +
  '</g><rect x="384" y="383" width="4" height="4" fill="#217346"/>';
```
